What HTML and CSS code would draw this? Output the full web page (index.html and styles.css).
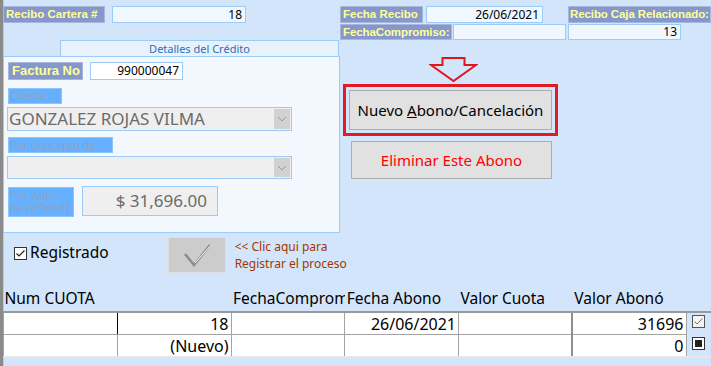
FILE: index.html
```html
<!DOCTYPE html>
<html lang="es">
<head>
    <meta charset="UTF-8">
    <title>Abonos de Cartera</title>
    <link rel="stylesheet" href="styles.css">
</head>
<body>
    <div class="form">
        <!-- cabecera del recibo -->
        <div class="row row-top">
            <span class="lbl w-recibo">Recibo Cartera #</span>
            <span class="txt w-recnum">18</span>
            <span class="lbl w-fecha">Fecha Recibo</span>
            <span class="txt w-fechaval">26/06/2021</span>
            <span class="lbl w-caja">Recibo Caja Relacionado:</span>
        </div>
        <div class="row row-second">
            <span class="lbl w-comp">FechaCompromiso:</span>
            <span class="txt w-compval"></span>
            <span class="txt w-cajaval">13</span>
        </div>
        <div class="tab">Detalles del Crédito</div>

        <div class="main">
            <div class="panel">
                <div class="row">
                    <span class="lbl w-factura">Factura No</span>
                    <span class="txt w-facturaval">990000047</span>
                </div>
                <div class="plbl w-cliente">Cliente</div>
                <div class="combo">
                    <span class="combo-text">GONZALEZ ROJAS VILMA</span>
                    <span class="combo-btn">
                        <svg width="10" height="6" viewBox="0 0 10 6"><path d="M1 1 L5 5 L9 1" fill="none" stroke="#9a9a9a" stroke-width="1"/></svg>
                    </span>
                </div>
                <div class="plbl w-concepto">Por Concepto de:</div>
                <div class="combo combo-small">
                    <span class="combo-text"></span>
                    <span class="combo-btn">
                        <svg width="10" height="6" viewBox="0 0 10 6"><path d="M1 1 L5 5 L9 1" fill="none" stroke="#9a9a9a" stroke-width="1"/></svg>
                    </span>
                </div>
                <div class="row row-valor">
                    <div class="plbl w-valor">Por valor de (VrTotal):</div>
                    <div class="valor">$ 31,696.00</div>
                </div>
            </div>

            <div class="actions">
                <svg class="arrow" width="49" height="26" viewBox="0 0 49 26">
                    <path d="M13.5 1 H35.5 V8 H47 L24.5 24 L2 8 H13.5 Z" fill="none" stroke="#e3141c" stroke-width="2"/>
                </svg>
                <div class="highlight">
                    <button class="btn btn-nuevo">Nuevo <u>A</u>bono/Cancelación</button>
                </div>
                <button class="btn btn-eliminar">Eliminar Este Abono</button>
            </div>
        </div>

        <div class="row row-registro">
            <span class="chk">
                <svg width="13" height="13" viewBox="0 0 13 13"><rect x="0.5" y="0.5" width="12" height="12" fill="#fff" stroke="#333"/><path d="M2.5 6.5 L5 9 L10.5 3.5" fill="none" stroke="#222" stroke-width="1.2"/></svg>
            </span>
            <span class="chk-text">Registrado</span>
            <span class="btn-check">
                <svg width="40" height="26" viewBox="0 0 40 26"><path d="M8 12 L17 23 L33 3" fill="none" stroke="#8c8c8c" stroke-width="2.5"/><path d="M18 21 L33.5 3.5" fill="none" stroke="#fff" stroke-width="1"/></svg>
            </span>
            <span class="hint">&lt;&lt; Clic aqui para<br>Registrar el proceso</span>
        </div>

        <table class="grid">
            <thead>
                <tr>
                    <th colspan="2" class="h-num">Num CUOTA</th>
                    <th class="h-clip"><span class="clip">FechaCompromiso</span></th>
                    <th>Fecha Abono</th>
                    <th>Valor Cuota</th>
                    <th>Valor Abonó</th>
                    <th class="sel"></th>
                </tr>
            </thead>
            <tbody>
                <tr>
                    <td class="c0 cursor"></td>
                    <td class="c1">18</td>
                    <td class="c2"></td>
                    <td class="c3">26/06/2021</td>
                    <td class="c4"></td>
                    <td class="c5">31696</td>
                    <td class="sel">
                        <svg width="13" height="13" viewBox="0 0 13 13"><rect x="0.5" y="0.5" width="12" height="12" fill="#f4f4f4" stroke="#555"/><path d="M2.5 6.5 L5 9 L10.5 3.5" fill="none" stroke="#777" stroke-width="1"/></svg>
                    </td>
                </tr>
                <tr>
                    <td class="c0"></td>
                    <td class="c1">(Nuevo)</td>
                    <td class="c2"></td>
                    <td class="c3"></td>
                    <td class="c4"></td>
                    <td class="c5">0</td>
                    <td class="sel">
                        <svg width="13" height="13" viewBox="0 0 13 13"><rect x="0.5" y="0.5" width="12" height="12" fill="#fff" stroke="#333"/><rect x="3" y="3" width="7" height="7" fill="#222"/></svg>
                    </td>
                </tr>
            </tbody>
        </table>
    </div>
</body>
</html>
```

FILE: styles.css
```css
body {
    margin: 0;
    background-color: #d3e5fa;
    font-family: "Noto Sans", "Liberation Sans", sans-serif;
}

.form {
    width: 708px;
    height: 366px;
    border-left: 3px solid #8a8a8a;
    box-shadow: inset 1px 0 0 #c8c8c8;
    overflow: hidden;
}

.row {
    display: flex;
    align-items: flex-start;
}

.lbl {
    box-sizing: border-box;
    height: 17px;
    padding: 0 2px;
    background-color: #8698cb;
    border: 1px solid #a9b6dc;
    color: #ffff99;
    font-family: "Liberation Sans", Arial, sans-serif;
    font-weight: bold;
    font-size: 11.5px;
    line-height: 15px;
    white-space: nowrap;
    overflow: hidden;
}

.txt {
    box-sizing: border-box;
    height: 17px;
    padding: 0 3px;
    background-color: #f0f7fe;
    border: 1px solid #9cccf6;
    font-size: 12px;
    line-height: 15px;
    text-align: right;
    color: #000;
}

.row-top {
    padding-top: 6px;
}

.w-recibo { width: 102px; }
.w-recnum { width: 134px; margin-left: 7px; }
.w-fecha { width: 83px; margin-left: 94px; }
.w-fechaval { width: 117px; margin-left: 3px; }
.w-caja { width: 143px; margin-left: 25px; padding-left: 1px; letter-spacing: -0.1px; }

.row-second {
    margin-top: 1px;
}

.row-second .lbl,
.row-second .txt {
    height: 16px;
    line-height: 14px;
}

.w-comp { width: 112px; margin-left: 337px; letter-spacing: -0.1px; }
.w-compval { width: 113px; margin-left: 1px; }
.w-cajaval { width: 113px; margin-left: 2px; }

.tab {
    box-sizing: border-box;
    width: 279px;
    height: 16px;
    margin-left: 57px;
    background-color: #e8f2fd;
    border: 1px solid #9cccf6;
    border-bottom: none;
    color: #2f6eb5;
    font-size: 11px;
    line-height: 15px;
    text-align: center;
}

.main {
    display: flex;
}

.panel {
    box-sizing: border-box;
    width: 337px;
    height: 177px;
    padding: 5px 4px;
    background-color: #f2f8fe;
    border: 1px solid #9cccf6;
}

.w-factura {
    width: 75px;
    height: 18px;
    line-height: 16px;
    font-size: 13px;
    padding-left: 3px;
}

.w-facturaval {
    width: 93px;
    height: 18px;
    line-height: 16px;
    margin-left: 7px;
    background-color: #fff;
}

.plbl {
    box-sizing: border-box;
    background-color: #66b1ff;
    border: 1px solid #8cc4fb;
    color: #8ea2bd;
    font-size: 11px;
    line-height: 14px;
    padding: 0 1px;
    white-space: nowrap;
}

.w-cliente { width: 54px; height: 16px; margin-top: 8px; }
.w-concepto { width: 105px; height: 16px; margin-top: 6px; }

.combo {
    box-sizing: border-box;
    display: flex;
    width: 285px;
    height: 24px;
    margin: 3px 0 0 -1px;
    background-color: #efefef;
    border: 1px solid #9cccf6;
}

.combo-small {
    height: 23px;
}

.combo-text {
    flex: 1;
    padding-left: 1px;
    color: #6b6b6b;
    font-size: 17px;
    line-height: 21px;
}

.combo-btn {
    display: flex;
    align-items: center;
    justify-content: center;
    width: 16px;
    margin: 1px;
    background-color: #d1d1d1;
}

.row-valor {
    margin-top: 7px;
}

.w-valor {
    width: 66px;
    height: 30px;
    margin-top: 1px;
    line-height: 13px;
    white-space: normal;
}

.valor {
    box-sizing: border-box;
    width: 136px;
    height: 30px;
    margin-left: 8px;
    padding-right: 10px;
    background-color: #efefef;
    border: 1px solid #9cccf6;
    color: #6b6b6b;
    font-size: 17px;
    line-height: 27px;
    text-align: right;
}

.actions {
    display: flex;
    flex-direction: column;
    margin-left: 3px;
}

.arrow {
    display: block;
    margin: 1px 0 0 86px;
}

.highlight {
    box-sizing: border-box;
    width: 215px;
    height: 52px;
    margin-top: 1px;
    padding: 3px;
    border: 3px solid #e21b23;
}

.btn {
    box-sizing: border-box;
    display: block;
    background-color: #e1e1e1;
    border: 1px solid #adadad;
    font-family: "Noto Sans", "Liberation Sans", sans-serif;
    font-size: 15px;
    padding: 0;
}

.btn-nuevo {
    width: 203px;
    height: 40px;
    color: #000;
}

.btn-eliminar {
    width: 201px;
    height: 38px;
    margin: 5px 0 0 8px;
    color: #ff0000;
}

.row-registro {
    height: 40px;
    padding-top: 2px;
    align-items: center;
}

.chk {
    display: flex;
    margin: 0 0 4px 11px;
}

.chk-text {
    margin: 0 0 6px 3px;
    font-size: 15.5px;
    color: #000;
}

.btn-check {
    box-sizing: border-box;
    display: flex;
    align-items: center;
    justify-content: center;
    width: 58px;
    height: 36px;
    margin-left: 59px;
    background-color: #cccccc;
    border: 1px solid #dedede;
}

.hint {
    margin: 0 0 0 9px;
    color: #a33600;
    font-size: 12px;
    line-height: 17px;
}

.grid {
    border-collapse: collapse;
    table-layout: fixed;
    width: 708px;
    margin-top: 14px;
    font-size: 16px;
}

.grid th {
    height: 22px;
    padding: 0 0 0 2px;
    font-weight: normal;
    text-align: left;
    color: #000;
    white-space: nowrap;
    vertical-align: top;
    line-height: 18px;
    font-size: 15.5px;
}

.grid th.h-num {
    padding-left: 1px;
}

.grid th.h-clip {
    overflow: hidden;
}

.clip {
    display: block;
    overflow: hidden;
}

.grid td {
    height: 21px;
    padding: 0 2px 0 0;
    background-color: #fff;
    border: 1px solid #a3a3a3;
    text-align: right;
    line-height: 18px;
    color: #000;
}

.grid tbody tr:first-child td {
    border-top: 2px solid #9a9a9a;
}

.grid tbody tr:last-child td {
    border-bottom: 2px solid #e6e6e6;
}

.grid td.c0 { width: 111px; }
.grid td.c0.cursor { border-right: 1px solid #000; }
.grid td.c1 { width: 112px; }
.grid td.c2 { width: 112px; }
.grid td.c3 { width: 111px; }
.grid td.c4 { width: 111px; }
.grid td.c5 { width: 114px; border-left: 2px solid #8f8f8f; }

.grid .sel,
.grid td.sel {
    width: 20px;
    background-color: #d3e5fa;
    border: none;
    text-align: left;
    padding-left: 5px;
    vertical-align: top;
}
```
